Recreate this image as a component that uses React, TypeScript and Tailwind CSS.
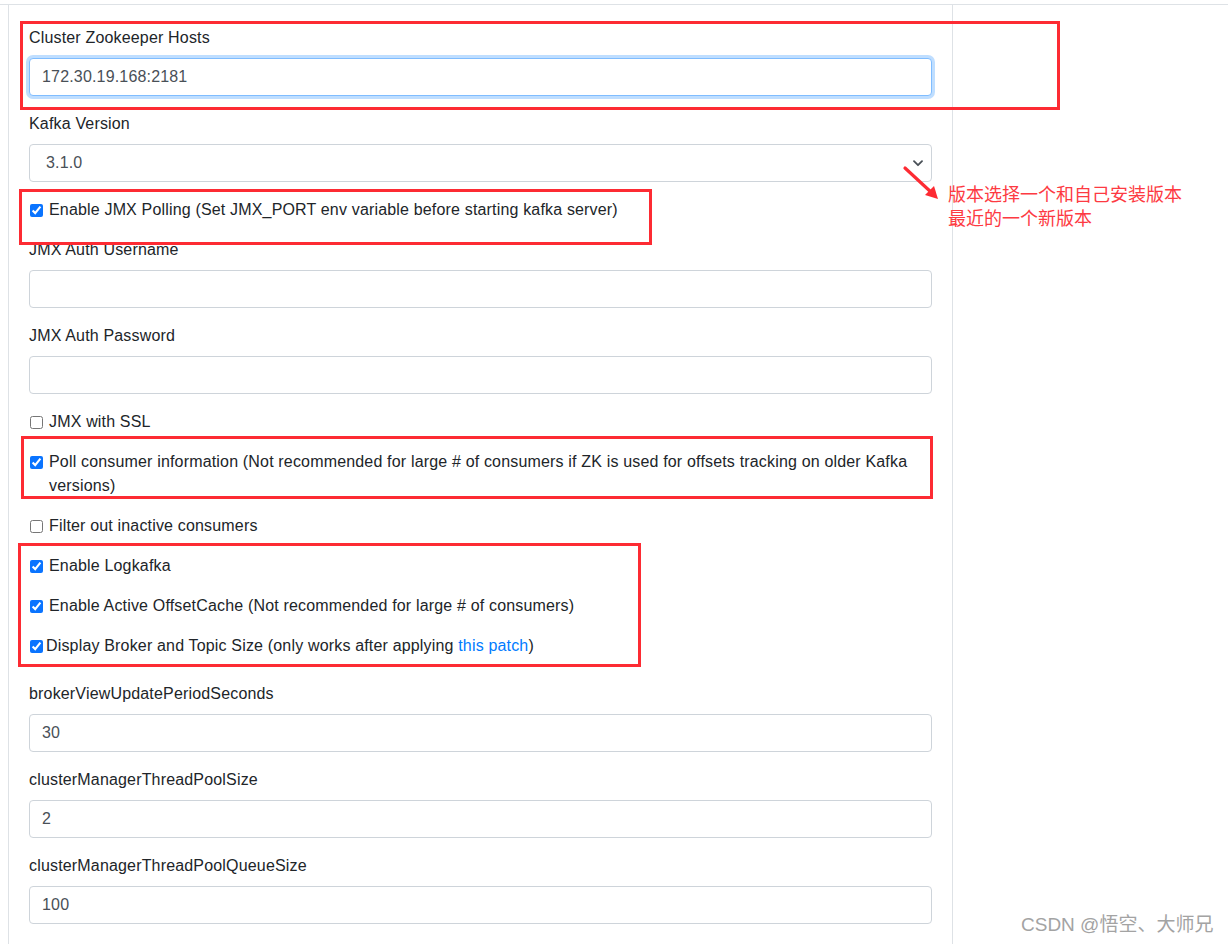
import React from "react"

function Field({ label, value, focused }: { label: string; value: string; focused?: boolean }) {
  return (
    <div className="mb-4">
      <label className="block mb-2 leading-6 text-[#212529]">{label}</label>
      <input
        readOnly
        defaultValue={value}
        className={
          "block w-full h-[38px] px-3 rounded-[4px] border bg-white text-[#495057] tracking-[0.17px] outline-none " +
          (focused
            ? "border-[#80bdff] shadow-[0_0_0_3px_rgba(0,123,255,0.25)]"
            : "border-[#ced4da]")
        }
      />
    </div>
  )
}

function Check({
  checked,
  children,
  tight,
}: {
  checked?: boolean
  children: React.ReactNode
  tight?: boolean
}) {
  return (
    <div className="mb-4 flex items-start leading-6 text-[#212529]">
      <input
        type="checkbox"
        readOnly
        defaultChecked={checked}
        className="mt-[6px] ml-px h-[13px] w-[13px] shrink-0 accent-[#0a74ff]"
      />
      <span className={tight ? "ml-[3px]" : "ml-[6px]"}>{children}</span>
    </div>
  )
}

export default function App() {
  return (
    <div className="relative h-[944px] overflow-hidden bg-white font-['Liberation_Sans','Noto_Sans_CJK_SC',sans-serif] text-[16px] tracking-[0.17px]">
      <div className="mt-[4px] border-t border-[#dee2e6]">
        <div className="ml-[8px] w-[945px] h-[940px] border-l border-r border-[#dee2e6] px-[20px] pt-[21px]">
          <Field label="Cluster Zookeeper Hosts" value="172.30.19.168:2181" focused />

          <div className="mb-4">
            <label className="block mb-2 leading-6 text-[#212529]">Kafka Version</label>
            <div className="flex h-[38px] items-center justify-between rounded-[4px] border border-[#ced4da] pl-4 pr-[8px] text-[#495057]">
              <span>3.1.0</span>
              <svg width="10" height="7" viewBox="0 0 10 7" fill="none">
                <path d="M1 1.2l4 4 4-4" stroke="#495057" strokeWidth="1.8" strokeLinecap="round" strokeLinejoin="round" />
              </svg>
            </div>
          </div>

          <Check checked>Enable JMX Polling (Set JMX_PORT env variable before starting kafka server)</Check>
          <Field label="JMX Auth Username" value="" />
          <Field label="JMX Auth Password" value="" />
          <Check>JMX with SSL</Check>
          <Check checked>
            Poll consumer information (Not recommended for large # of consumers if ZK is used for offsets tracking on older Kafka versions)
          </Check>
          <Check>Filter out inactive consumers</Check>
          <Check checked>Enable Logkafka</Check>
          <Check checked>Enable Active OffsetCache (Not recommended for large # of consumers)</Check>
          <div className="mb-6">
            <Check checked tight>
              Display Broker and Topic Size (only works after applying <span className="text-[#007bff]">this patch</span>)
            </Check>
          </div>
          <Field label="brokerViewUpdatePeriodSeconds" value="30" />
          <Field label="clusterManagerThreadPoolSize" value="2" />
          <Field label="clusterManagerThreadPoolQueueSize" value="100" />
        </div>
      </div>

      {/* annotation boxes */}
      <div className="absolute left-[20px] top-[21px] h-[89px] w-[1040px] border-[3px] border-[#fd2b33]" />
      <div className="absolute left-[19px] top-[189px] h-[56px] w-[633px] border-[3px] border-[#fd2b33]" />
      <div className="absolute left-[21px] top-[436px] h-[63px] w-[912px] border-[3px] border-[#fd2b33]" />
      <div className="absolute left-[18px] top-[543px] h-[124px] w-[623px] border-[3px] border-[#fd2b33]" />

      {/* arrow */}
      <svg className="absolute left-[898px] top-[160px]" width="48" height="46" viewBox="0 0 48 46">
        <path d="M7 8 L34 33" stroke="#fd2b33" strokeWidth="3.2" strokeLinecap="round" />
        <path d="M40 39 L27 35 L36 26 Z" fill="#fd2b33" />
      </svg>
      <div className="absolute left-[948px] top-[181px] text-[18px] leading-6 tracking-normal text-[#fd3a42] font-['Noto_Sans_CJK_SC',sans-serif]">
        <div>版本选择一个和自己安装版本</div>
        <div>最近的一个新版本</div>
      </div>

      <div className="absolute left-[1021px] top-[913px] text-[19px] leading-6 tracking-normal text-[#a3a3a3] font-['Liberation_Sans','Noto_Sans_CJK_SC',sans-serif]">
        CSDN @悟空、大师兄
      </div>
    </div>
  )
}
